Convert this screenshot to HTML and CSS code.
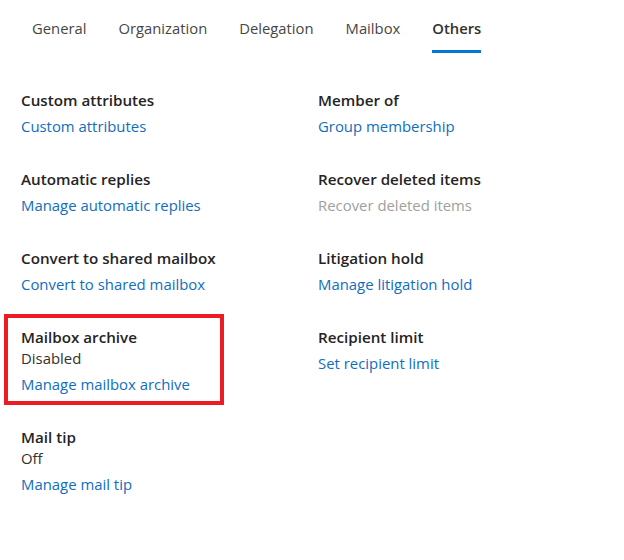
FILE: index.html
```html
<!DOCTYPE html>
<html>
<head>
<meta charset="utf-8">
<link rel="stylesheet" href="styles.css">
</head>
<body>
<div class="page">
  <nav class="tabs">
    <span class="tab">General</span>
    <span class="tab">Organization</span>
    <span class="tab">Delegation</span>
    <span class="tab">Mailbox</span>
    <span class="tab active">Others</span>
  </nav>
  <div class="grid">
    <div class="col">
      <div class="item">
        <div class="label">Custom attributes</div>
        <a class="link">Custom attributes</a>
      </div>
      <div class="item">
        <div class="label">Automatic replies</div>
        <a class="link">Manage automatic replies</a>
      </div>
      <div class="item">
        <div class="label">Convert to shared mailbox</div>
        <a class="link">Convert to shared mailbox</a>
      </div>
      <div class="item highlight">
        <div class="label">Mailbox archive</div>
        <div class="value">Disabled</div>
        <a class="link">Manage mailbox archive</a>
      </div>
      <div class="item">
        <div class="label">Mail tip</div>
        <div class="value">Off</div>
        <a class="link">Manage mail tip</a>
      </div>
    </div>
    <div class="col">
      <div class="item">
        <div class="label">Member of</div>
        <a class="link">Group membership</a>
      </div>
      <div class="item">
        <div class="label">Recover deleted items</div>
        <a class="link disabled">Recover deleted items</a>
      </div>
      <div class="item">
        <div class="label">Litigation hold</div>
        <a class="link">Manage litigation hold</a>
      </div>
      <div class="item">
        <div class="label">Recipient limit</div>
        <a class="link">Set recipient limit</a>
      </div>
    </div>
  </div>
</div>
</body>
</html>
```
FILE: styles.css
```css
*, *::before, *::after { box-sizing: border-box; }
html, body { margin: 0; padding: 0; background: #fff; }
body {
  font-family: "Open Sans", "Noto Sans", sans-serif;
  font-size: 14.9px;
  color: #323130;
}
.page { width: 624px; height: 560px; }
.tabs {
  display: flex;
  gap: 32px;
  padding: 17px 0 0 32px;
  height: 53px;
}
.tab {
  color: #484644;
  font-size: 14.8px;
  line-height: 22px;
  height: 36px;
  position: relative;
}
.tab.active { font-weight: 600; color: #323130; }
.tab.active::after {
  content: "";
  position: absolute;
  left: 0; right: 0;
  top: 33px;
  height: 3px;
  background: #0078d4;
}
.grid {
  display: grid;
  grid-template-columns: 297px 1fr;
  padding: 37px 0 0 21px;
}
.col { display: flex; flex-direction: column; gap: 33px; }
.item { display: flex; flex-direction: column; line-height: 20px; }
.label { font-weight: 600; font-size: 15.2px; color: #252423; }
.value { color: #323130; margin-top: 1px; }
.link { color: #106ebe; margin-top: 6px; }
.link.disabled { color: #a19f9d; }
.highlight { position: relative; }
.highlight::before {
  content: "";
  position: absolute;
  left: -17px; top: -13px;
  width: 220px; height: 91px;
  border: 4px solid #ed1c24;
}
```
